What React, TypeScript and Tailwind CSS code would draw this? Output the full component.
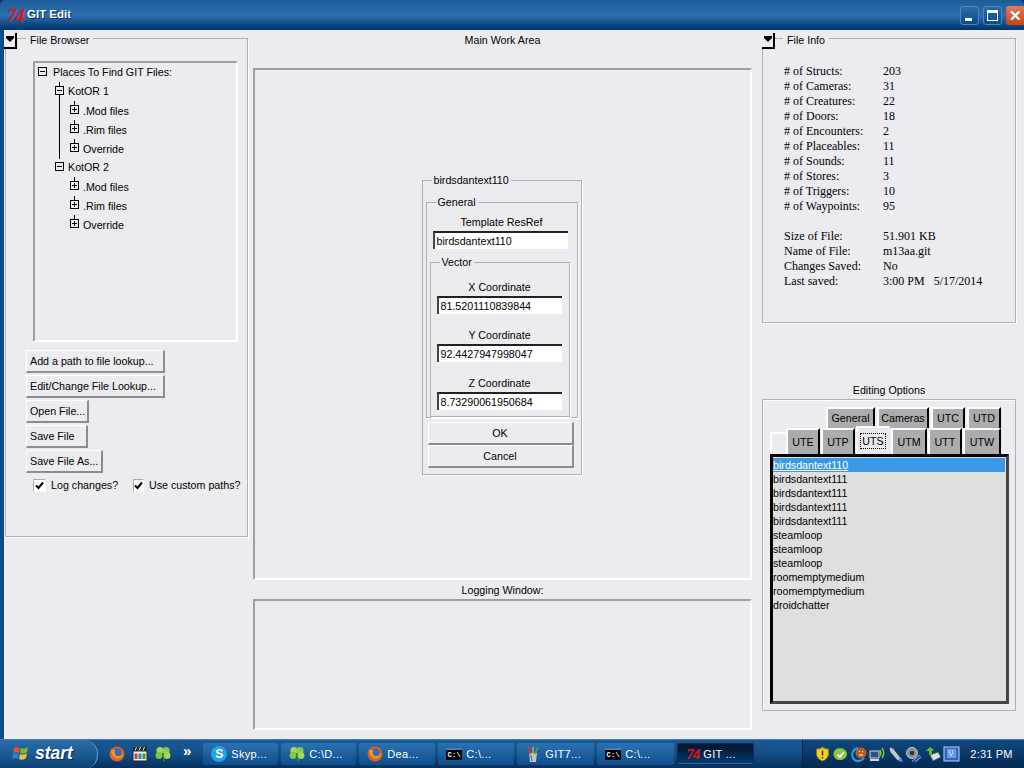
import React from "react";

const Plus = ({ minus = false }: { minus?: boolean }) => (
  <svg width="9" height="9" viewBox="0 0 9 9" className="mb-[2px] shrink-0">
    <rect x="0.5" y="0.5" width="8" height="8" fill="none" stroke="#000" />
    <path d={minus ? "M2 4.5H7" : "M2 4.5H7M4.5 2V7"} stroke="#000" />
  </svg>
);

const TreeRow = ({ label, indent, minus, dash = true, gap = "ml-[4px]" }: { label: string; indent: string; minus?: boolean; dash?: boolean; gap?: string }) => (
  <div className={`relative flex h-[19px] items-center ${indent}`}>
    {dash && <span className="absolute top-0 ml-[4px] h-[4px] w-px bg-black" />}
    <Plus minus={minus} />
    <span className={`${gap} whitespace-nowrap leading-none`}>{label}</span>
  </div>
);

const FileRow = ({ label }: { label: string }) => (
  <div className="relative ml-[32px] flex h-[19px] items-center">
    <span className="absolute top-0 ml-[4px] h-[4px] w-px bg-black" />
    <Plus />
    <span className="ml-[4px] mt-[2px] whitespace-nowrap leading-none">{label}</span>
  </div>
);

const Btn = ({ children, w }: { children: React.ReactNode; w: string }) => (
  <button className={`block h-[23px] ${w} whitespace-nowrap border-t border-l border-t-white border-l-white border-r-2 border-b-2 border-r-[#8c8c90] border-b-[#8c8c90] pl-[3px] text-left leading-none text-black`}>
    {children}
  </button>
);

const Check = ({ label, w }: { label: string; w: string }) => (
  <div className={`flex items-center ${w}`}>
    <span className="flex h-[13px] w-[13px] items-center justify-center border border-t-[#aaa] border-l-[#aaa] border-r-white border-b-white bg-white">
      <svg width="9" height="9" viewBox="0 0 9 9"><path d="M1 4.5L3.5 7L8 1.5" fill="none" stroke="#000" strokeWidth="2" /></svg>
    </span>
    <span className="ml-[5px] whitespace-nowrap">{label}</span>
  </div>
);

const Field = ({ value, w, h = "h-[18px]" }: { value: string; w: string; h?: string }) => (
  <div className={`${w} ${h} flex items-center border-t-2 border-l-2 border-t-[#222] border-l-[#444] bg-white pl-[2px] leading-none`}>{value}</div>
);

const Tab = ({ label, w, h = "h-[21px]", active = false, blank = false }: { label?: string; w: string; h?: string; active?: boolean; blank?: boolean }) => (
  <div className={`${w} ${h} flex shrink-0 items-center justify-center whitespace-nowrap border-t-2 border-l-2 border-t-white border-l-white leading-none ${active ? "bg-[#e8e8ee] border-r-2 border-r-[#e8e8ee]" : blank ? "bg-[#ecebf0]" : "bg-[#acacae] border-r-2 border-r-black"}`}>
    {active ? <span className="border border-dotted border-black px-[1px] py-[2px]">{label}</span> : label}
  </div>
);

const Drop = ({ left }: { left: string }) => (
  <div className={`absolute ${left} top-0 z-10 flex h-[16px] w-[13px] items-center justify-center border-r-2 border-b-2 border-r-black border-b-black bg-[#ecebf0]`}>
    <span className="border-x-[4px] border-t-[4px] border-x-transparent border-t-black shadow-[0_-2px_0_#000]" />
  </div>
);

const Sunken = ({ className = "", children }: { className?: string; children?: React.ReactNode }) => (
  <div className={`border-2 border-t-[#9c9ca2] border-l-[#9c9ca2] border-r-white border-b-white ${className}`}>{children}</div>
);

const Firefox = ({ s = 16 }: { s?: number }) => (
  <svg width={s} height={s} viewBox="0 0 16 16" className="shrink-0">
    <circle cx="8" cy="8" r="7.5" fill="#e0611a" />
    <circle cx="8.5" cy="6.8" r="4.4" fill="#3c69b4" />
    <path d="M2.5 3C1.5 7 4 12.5 9 12.5C12 12.5 14.3 10 14.2 6.5C13 9.5 10 10.8 8 10C5.5 9 5 6 6.5 4.3C5 4.5 3.5 4 2.5 3Z" fill="#f39a26" />
  </svg>
);
const Clover = ({ s = 16 }: { s?: number }) => (
  <svg width={s} height={s} viewBox="0 0 16 16" className="shrink-0">
    <circle cx="5" cy="4.5" r="3.6" fill="#a3d65a" /><circle cx="11" cy="4.5" r="3.6" fill="#8ccb45" />
    <circle cx="4" cy="9.5" r="3.4" fill="#86c63f" /><circle cx="12" cy="9.5" r="3.4" fill="#a3d65a" />
    <path d="M8 7.5L9.5 15.5" stroke="#4e8c24" strokeWidth="1.3" />
  </svg>
);
const Clapper = () => (
  <svg width="16" height="16" viewBox="0 0 16 16" className="shrink-0">
    <rect x="1" y="5" width="14" height="10" fill="#f2f2f2" stroke="#222" />
    <path d="M1 2L14.5 0.5L15 4.5H1Z" fill="#222" />
    <path d="M3 4.5L4.5 1.5M7 4.5L8.5 1M11 4.5L12.5 1" stroke="#eee" />
    <rect x="2.5" y="7.5" width="3" height="5.5" fill="#d8392f" /><rect x="6.5" y="7.5" width="3" height="5.5" fill="#2c86b8" /><rect x="10.5" y="7.5" width="3" height="5.5" fill="#3a9a3a" />
  </svg>
);
const Cmd = () => (
  <span className="flex h-[12px] w-[16px] shrink-0 items-center justify-center border-t-2 border-[#4a7eb8] bg-black font-['Liberation_Mono',monospace] text-[7px] font-bold leading-none text-white">C:\</span>
);
const Cups = () => (
  <svg width="16" height="18" viewBox="0 0 16 18" className="shrink-0">
    <path d="M4 8H12L11 17H5Z" fill="#c9c4b0" />
    <path d="M5 9L3 1" stroke="#d33" strokeWidth="1.6" /><path d="M8 9V2" stroke="#e8a020" strokeWidth="1.6" /><path d="M10 9L13 2" stroke="#3a6" strokeWidth="1.6" />
    <path d="M6 10L7 16" stroke="#38c" strokeWidth="1.4" />
  </svg>
);
const Skype = () => (
  <span className="flex h-[16px] w-[16px] shrink-0 items-center justify-center rounded-full bg-[#21a5e6] font-['Liberation_Sans',sans-serif] text-[12px] font-bold leading-none text-white">S</span>
);
const Logo = ({ size = "text-[19px]" }: { size?: string }) => (
  <span className={`font-['Liberation_Serif',serif] font-bold italic leading-none tracking-[-1px] text-[#ee1111] ${size}`}>74</span>
);

const Task = ({ icon, label, w, active = false }: { icon: React.ReactNode; label: string; w: string; active?: boolean }) => (
  <div className={`${w} flex h-[22px] shrink-0 items-center gap-[4px] rounded-[2px] pl-[8px] text-[11px] tracking-[0.3px] text-white ${active ? "border border-[#0b2c52] bg-gradient-to-b from-[#02152e] to-[#053a70] shadow-[inset_0_-1px_0_#1f6cb0]" : "bg-gradient-to-b from-[#2a72b4] to-[#0f4d8a]"}`}>
    {icon}<span className="whitespace-nowrap leading-none">{label}</span>
  </div>
);

const stats1 = [["# of Structs:", "203"], ["# of Cameras:", "31"], ["# of Creatures:", "22"], ["# of Doors:", "18"], ["# of Encounters:", "2"], ["# of Placeables:", "11"], ["# of Sounds:", "11"], ["# of Stores:", "3"], ["# of Triggers:", "10"], ["# of Waypoints:", "95"]];
const stats2 = [["Size of File:", "51.901 KB"], ["Name of File:", "m13aa.git"], ["Changes Saved:", "No"], ["Last saved:", "3:00 PM   5/17/2014"]];
const items = ["birdsdantext111", "birdsdantext111", "birdsdantext111", "birdsdantext111", "steamloop", "steamloop", "steamloop", "roomemptymedium", "roomemptymedium", "droidchatter"];

const fs = "min-w-0 border border-[#aeaeb4] shadow-[1px_1px_0_#fff]";

export default function App() {
  return (
    <div className="flex h-[768px] w-[1024px] flex-col overflow-hidden bg-[#0b3766] font-['Liberation_Sans',Arial,sans-serif] text-[10.7px] text-black">
      {/* Title bar */}
      <div className="flex h-[30px] shrink-0 items-center rounded-t-[5px] bg-gradient-to-b from-[#1c5c98] via-[#2a6fae] to-[#00356a] pl-[7px]">
        <Logo />
        <span className="ml-[3px] text-[11.5px] font-bold text-white [text-shadow:1px_1px_0_#0a2a55]">GIT Edit</span>
        <div className="ml-auto flex items-center gap-[4px]">
          <div className="flex h-[19px] w-[19px] items-end justify-start rounded-[3px] border border-[#4f86bd] bg-gradient-to-b from-[#2a6cab] to-[#0f4a85] pb-[3px] pl-[4px]"><span className="h-[3px] w-[7px] bg-white" /></div>
          <div className="flex h-[19px] w-[19px] items-center justify-center rounded-[3px] border border-[#4f86bd] bg-gradient-to-b from-[#2a6cab] to-[#0f4a85]"><span className="h-[11px] w-[11px] border border-t-[3px] border-white" /></div>
          <div className="flex h-[19px] w-[18px] items-center justify-center rounded-l-[3px] bg-gradient-to-b from-[#e87a55] to-[#c8400f] text-[15px] font-bold leading-none text-white">✕</div>
        </div>
      </div>

      {/* Body */}
      <div className="flex h-[709px] shrink-0 border-l-[4px] border-[#0f4a80] bg-[#ecebf0] pt-[3px]">
        {/* Left */}
        <div className="relative ml-[1px] w-[243px] shrink-0">
          <Drop left="left-[-1px]" />
          <fieldset className={`h-[504px] w-[243px] ${fs}`}>
            <legend className="ml-[20px] h-[10px] px-[4px] leading-[14px]">File Browser</legend>
            <div className="pl-[27px] pt-[18px]">
              <Sunken className="relative h-[281px] w-[205px] pl-[3px]">
                <span className="absolute left-[24px] top-[32px] h-[64px] w-px bg-black" />
                <TreeRow label="Places To Find GIT Files:" indent="" minus dash={false} gap="ml-[6px]" />
                <TreeRow label="KotOR 1" indent="ml-[17px]" minus />
                <FileRow label=".Mod files" />
                <FileRow label=".Rim files" />
                <FileRow label="Override" />
                <TreeRow label="KotOR 2" indent="ml-[17px]" minus dash={false} />
                <FileRow label=".Mod files" />
                <FileRow label=".Rim files" />
                <FileRow label="Override" />
              </Sunken>
              <div className="-ml-[7px] mt-[8px] flex flex-col gap-[2px]">
                <Btn w="w-[139px]">Add a path to file lookup...</Btn>
                <Btn w="w-[139px]">Edit/Change File Lookup...</Btn>
                <Btn w="w-[63px]">Open File...</Btn>
                <Btn w="w-[62px]">Save File</Btn>
                <Btn w="w-[77px]">Save File As...</Btn>
              </div>
              <div className="mt-[4px] flex">
                <Check label="Log changes?" w="w-[100px]" />
                <Check label="Use custom paths?" w="w-[100px]" />
              </div>
            </div>
          </fieldset>
        </div>

        {/* Center */}
        <div className="ml-[5px] flex w-[499px] shrink-0 flex-col">
          <div className="h-[14px] text-center leading-[14px]">Main Work Area</div>
          <Sunken className="mt-[21px] flex h-[512px] items-center justify-center pr-[2px]">
            <fieldset className={`h-[302px] w-[160px] ${fs}`}>
              <legend className="ml-[9px] h-[14px] px-[2px] leading-[14px]">birdsdantext110</legend>
              <div className="px-[3px]">
                <fieldset className={`mt-[8px] h-[223px] w-[152px] ${fs} text-center`}>
                  <legend className="ml-[9px] h-[14px] px-[2px] text-left leading-[14px]">General</legend>
                  <div className="px-[3px]">
                    <div className="mt-[6px] h-[14px] leading-[14px]">Template ResRef</div>
                    <div className="ml-[3px] mt-[2px] flex justify-start text-left"><Field value="birdsdantext110" w="w-[135px]" /></div>
                    <fieldset className={`mt-[6px] h-[162px] w-[140px] ${fs}`}>
                      <legend className="ml-[9px] h-[14px] px-[2px] text-left leading-[14px]">Vector</legend>
                      <div className="px-[6px]">
                        <div className="mt-[11px] h-[14px] leading-[14px]">X Coordinate</div>
                        <div className="mt-[2px] text-left"><Field value="81.5201110839844" w="w-[125px]" /></div>
                        <div className="mt-[14px] h-[14px] leading-[14px]">Y Coordinate</div>
                        <div className="mt-[2px] text-left"><Field value="92.4427947998047" w="w-[125px]" /></div>
                        <div className="mt-[14px] h-[14px] leading-[14px]">Z Coordinate</div>
                        <div className="mt-[2px] text-left"><Field value="8.73290061950684" w="w-[125px]" /></div>
                      </div>
                    </fieldset>
                  </div>
                </fieldset>
                <div className="ml-[2px] mt-[4px] flex flex-col">
                  <button className="h-[23px] w-[146px] border-t border-l border-t-white border-l-white border-r-2 border-b-2 border-r-[#8c8c90] border-b-[#8c8c90] leading-none">OK</button>
                  <button className="h-[23px] w-[146px] border-t border-l border-t-white border-l-white border-r-2 border-b-2 border-r-[#8c8c90] border-b-[#8c8c90] leading-none">Cancel</button>
                </div>
              </div>
            </fieldset>
          </Sunken>
          <div className="mt-[3px] h-[14px] text-center leading-[14px]">Logging Window:</div>
          <Sunken className="mt-[2px] h-[131px]" />
        </div>

        {/* Right */}
        <div className="ml-[10px] w-[254px] shrink-0">
          <div className="relative">
            <Drop left="left-0" />
            <fieldset className={`h-[290px] w-[254px] ${fs}`}>
              <legend className="ml-[20px] h-[10px] px-[4px] leading-[14px]">File Info</legend>
              <div className="pl-[21px] pt-[21px] font-['Liberation_Serif',serif] text-[12px] leading-[15px]">
                <div className="grid grid-cols-[99px_1fr]">
                  {stats1.map(([a, b]) => (
                    <React.Fragment key={a}><span>{a}</span><span>{b}</span></React.Fragment>
                  ))}
                </div>
                <div className="mt-[15px] grid grid-cols-[99px_1fr]">
                  {stats2.map(([a, b]) => (
                    <React.Fragment key={a}><span>{a}</span><span className="whitespace-pre">{b}</span></React.Fragment>
                  ))}
                </div>
              </div>
            </fieldset>
          </div>
          <div className="mt-[60px] h-[14px] text-center leading-[14px]">Editing Options</div>
          <div className="mt-[2px] h-[312px] w-[254px] border border-[#aeaeb4] shadow-[inset_1px_1px_0_#fff] pl-[7px] pt-[7px]">
            <div className="flex h-[21px] gap-[2px] pl-[56px]">
              <Tab label="General" w="w-[49px]" />
              <Tab label="Cameras" w="w-[52px]" />
              <Tab label="UTC" w="w-[34px]" />
              <Tab label="UTD" w="w-[34px]" />
            </div>
            <div className="flex h-[26px] items-end gap-[1px]">
              <Tab blank w="w-[15px]" h="h-[22px]" />
              <Tab label="UTE" w="w-[34px]" h="h-[26px]" />
              <Tab label="UTP" w="w-[34px]" h="h-[26px]" />
              <Tab label="UTS" active w="w-[34px]" h="h-[28px]" />
              <Tab label="UTM" w="w-[36px]" h="h-[26px]" />
              <Tab label="UTT" w="w-[34px]" h="h-[26px]" />
              <Tab label="UTW" w="w-[38px]" h="h-[26px]" />
            </div>
            <div className="h-[250px] w-[239px] border-[3px] border-t-black border-l-black border-r-[#444] border-b-[#444] bg-[#dfdfdf] leading-[14px]">
              <div className="mr-[1px] mt-[1px] bg-[#3b9ae8] text-white underline">birdsdantext110</div>
              {items.map((t, i) => (
                <div key={i}>{t}</div>
              ))}
            </div>
          </div>
        </div>
      </div>

      {/* Taskbar */}
      <div className="flex h-[29px] shrink-0 items-center border-t border-[#3f7fbc] bg-gradient-to-b from-[#1a5a96] via-[#134f88] to-[#062f5c]">
        <div className="flex h-[29px] w-[98px] shrink-0 items-center rounded-r-[14px] border-r border-[#6f9ac4] bg-gradient-to-b from-[#2c6ca4] via-[#1b5a92] to-[#0d3f72] pl-[11px]">
          <svg width="18" height="18" viewBox="0 0 18 18" className="shrink-0">
            <path d="M3 3C5 2 7 2 9 3L8 8C6 7 4 7 2 8Z" fill="#e8532a" />
            <path d="M10 3C12 4 15 4 17 2L16 7C14 9 11 9 9 8Z" fill="#7fba2d" />
            <path d="M2 9C4 8 6 8 8 9L7 14C5 13 3 13 1 14Z" fill="#2f7fd6" />
            <path d="M9 9C11 10 14 10 16 8L15 13C13 15 10 15 8 14Z" fill="#f7c325" />
          </svg>
          <span className="ml-[6px] font-['Liberation_Sans',sans-serif] text-[17.5px] font-bold italic leading-none text-white [text-shadow:1px_1px_1px_#0a2a55]">start</span>
        </div>
        <div className="ml-[11px] flex items-center gap-[7px]">
          <Firefox /><Clapper /><Clover />
        </div>
        <span className="mb-[7px] ml-[12px] text-[15px] font-bold leading-none text-white">»</span>
        <div className="ml-[12px] flex items-center gap-[3px]">
          <Task icon={<Skype />} label="Skyp..." w="w-[75px]" />
          <Task icon={<Clover />} label="C:\D..." w="w-[75px]" />
          <Task icon={<Firefox />} label="Dea..." w="w-[76px]" />
          <Task icon={<Cmd />} label="C:\..." w="w-[76px]" />
          <Task icon={<Cups />} label="GIT7..." w="w-[77px]" />
          <Task icon={<Cmd />} label="C:\..." w="w-[77px]" />
          <Task icon={<Logo size="text-[15px]" />} label="GIT ..." w="w-[77px]" active />
        </div>
        <div className="ml-[48px] flex h-[29px] flex-1 items-center border-l border-[#04203f] bg-gradient-to-b from-[#0e4a80] to-[#04284f] pl-[12px]">
          <svg width="15" height="16" viewBox="0 0 15 16" className="shrink-0"><path d="M7.5 1C9 2.5 11 3 13.5 3V8C13.5 11 10.5 14 7.5 15C4.5 14 1.5 11 1.5 8V3C4 3 6 2.5 7.5 1Z" fill="#f5d020" stroke="#8a7a18" /><path d="M7.5 4.5V9.5M7.5 11V12.5" stroke="#333" strokeWidth="1.5" /></svg>
          <svg width="15" height="15" viewBox="0 0 15 15" className="ml-[3px] shrink-0"><path d="M2 3C5 0 14 1 14 7C14 13 5 15 2 11C0 9 0 5 2 3Z" fill="#8cc63f" /><path d="M4.5 7.5L7 10L11 5" fill="none" stroke="#fff" strokeWidth="1.6" /></svg>
          <svg width="17" height="17" viewBox="0 0 17 17" className="ml-[3px] shrink-0"><path d="M7 2C2 3 0 8 2 12C4 16 10 16 13 12" fill="none" stroke="#2aa0e6" strokeWidth="2" /><circle cx="10" cy="7" r="5.5" fill="#b95a1e" /><path d="M8 5.5H9M11 5.5H12M8 9H12" stroke="#fff" /></svg>
          <svg width="17" height="15" viewBox="0 0 17 15" className="ml-[1px] shrink-0"><rect x="1" y="4" width="9" height="7" fill="#33507a" stroke="#cdd7e6" /><rect x="1" y="12" width="9" height="2" fill="#cdd7e6" /><path d="M11 3C12 5 12 7 11 9M13 1C15 4 15 8 13 11" fill="none" stroke="#7ed321" strokeWidth="1.4" /></svg>
          <svg width="16" height="17" viewBox="0 0 16 17" className="ml-[2px] shrink-0"><path d="M1 1L5 2L12 11L13 16L9 14L2 6Z" fill="#c0c8d4" stroke="#223" strokeWidth="0.7" /><path d="M10 15L15 16L13 11" fill="#4d8fe0" /></svg>
          <svg width="17" height="17" viewBox="0 0 17 17" className="ml-[1px] shrink-0"><circle cx="7" cy="7" r="5.5" fill="#8b8f98" stroke="#ddd" strokeWidth="0.8" /><circle cx="7" cy="7" r="2.2" fill="#333" /><path d="M7 15.5L15 9M10 16L16 11" stroke="#7a8fe0" strokeWidth="1.2" /></svg>
          <svg width="15" height="16" viewBox="0 0 15 16" className="ml-[4px] shrink-0"><path d="M4 1L8 4L6 5V9H3V5H0Z" fill="#5fbf2e" /><path d="M4 9L12 6L15 11L7 15Z" fill="#d8dde6" stroke="#445" strokeWidth="0.7" /></svg>
          <svg width="17" height="16" viewBox="0 0 17 16" className="ml-[2px] shrink-0"><rect x="1" y="1" width="15" height="14" fill="#2f62b8" stroke="#bcd3f0" /><rect x="4" y="3" width="9" height="9" fill="#6f9ce0" /><path d="M6 5H7M9 5H10M6 7H7M9 7H10M7 9H9" stroke="#fff" /></svg>
          <span className="ml-[10px] whitespace-nowrap text-[11px] tracking-[0.2px] text-white">2:31 PM</span>
        </div>
      </div>
    </div>
  );
}
